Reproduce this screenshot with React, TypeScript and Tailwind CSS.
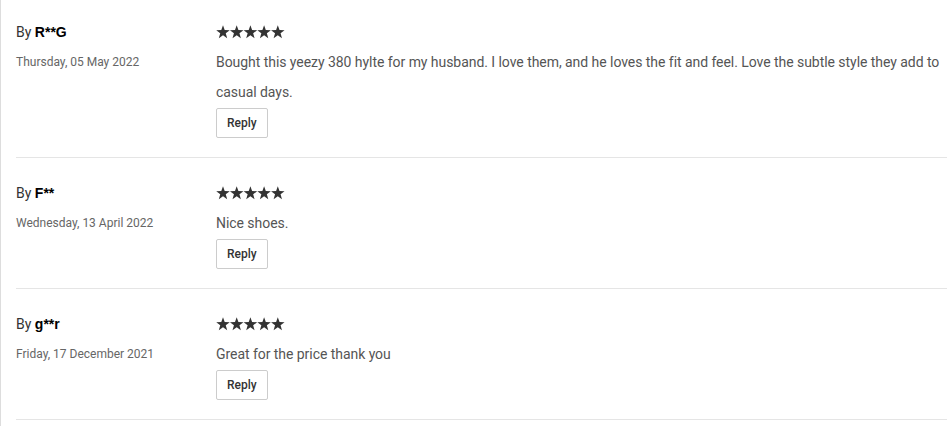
const reviews = [
  {
    author: 'R**G',
    date: 'Thursday, 05 May 2022',
    text: 'Bought this yeezy 380 hylte for my husband. I love them, and he loves the fit and feel. Love the subtle style they add to casual days.',
  },
  {
    author: 'F**',
    date: 'Wednesday, 13 April 2022',
    text: 'Nice shoes.',
  },
  {
    author: 'g**r',
    date: 'Friday, 17 December 2021',
    text: 'Great for the price thank you',
  },
];

// five-point star, outer radius 7, centred at (cx, 7.2)
function starPoints(cx: number) {
  const pts: string[] = [];
  for (let k = 0; k < 10; k++) {
    const r = k % 2 === 0 ? 7.1 : 2.9;
    const a = (Math.PI / 5) * k - Math.PI / 2;
    pts.push(`${(cx + r * Math.cos(a)).toFixed(2)},${(7.4 + r * Math.sin(a)).toFixed(2)}`);
  }
  return pts.join(' ');
}

function Stars() {
  return (
    <div className="flex h-[30px] items-center">
      <svg width="69" height="14" viewBox="0 0 69 14" className="block">
        {[0, 1, 2, 3, 4].map((i) => (
          <polygon key={i} points={starPoints(7 + i * 13.7)} fill="#333333" />
        ))}
      </svg>
    </div>
  );
}

export default function App() {
  return (
    <div className="min-h-[426px] w-[947px] bg-white border-l border-[#dddddd] font-['Roboto',sans-serif]">
      <ul className="pl-[15px]">
        {reviews.map((r, i) => (
          <li
            key={i}
            className="flex border-b border-[#e5e5e5] pt-5 pb-[19px] first:pt-[17px]"
          >
            <div className="w-[200px] shrink-0">
              <div className="h-[30px] leading-[30px] text-[14px] text-[#333]">
                By{' '}
                <span className="font-bold text-black font-['Liberation_Sans',sans-serif]">
                  {r.author}
                </span>
              </div>
              <div className="leading-[30px] text-[12px] text-[#666]">{r.date}</div>
            </div>
            <div className="flex-1">
              <Stars />
              <p className="leading-[30px] text-[14px] text-[#555] tracking-[-0.05px]">{r.text}</p>
              <button className="mt-px h-[30px] px-[10px] border border-[#cccccc] rounded-[2px] bg-white text-[12px] font-medium text-[#333]">
                Reply
              </button>
            </div>
          </li>
        ))}
      </ul>
    </div>
  );
}
